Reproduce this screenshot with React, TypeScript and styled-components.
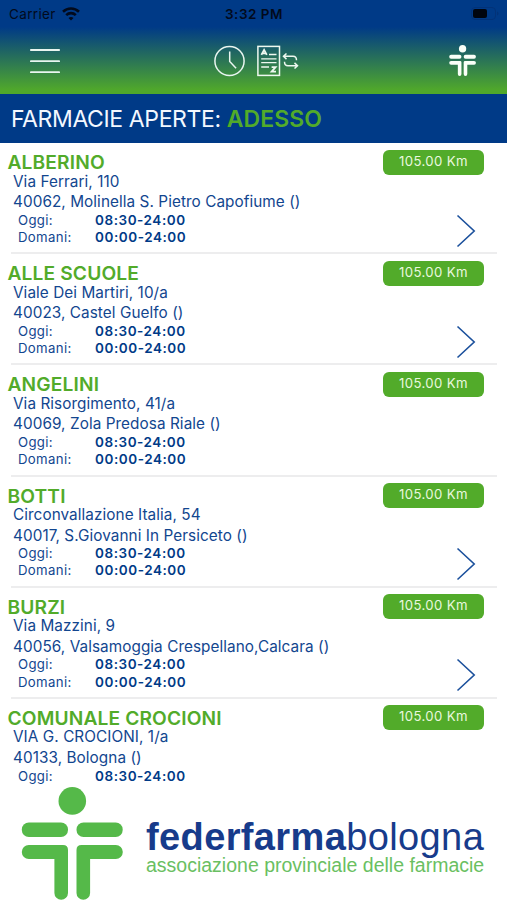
import React from "react";
import styled, { createGlobalStyle } from "styled-components";

const BLUE = "#003a87";
const GREEN = "#52ab2a";

const GlobalStyle = createGlobalStyle`
  *, *::before, *::after { box-sizing: border-box; }
  body { margin: 0; background: #fff; }
`;

const Screen = styled.div`
  display: flex;
  flex-direction: column;
  width: 507px;
  height: 900px;
  overflow: hidden;
  background: #fff;
  color: ${BLUE};
  font-family: Inter, sans-serif;
  white-space: nowrap;
`;

const Header = styled.header`
  flex: none;
  height: 94px;
  background: linear-gradient(to bottom, ${BLUE} 0, ${BLUE} 27px, #50a82b 90px, #50a82b 94px);
`;

const StatusBar = styled.div`
  display: grid;
  grid-template-columns: 1fr auto 1fr;
  align-items: center;
  height: 27px;
  padding: 0 8px 0 9px;
  color: #020a1c;
  font-size: 13.5px;
`;

const Carrier = styled.div`
  display: flex;
  align-items: center;
  gap: 6px;
  letter-spacing: 0.35px;
`;

const Clock = styled.div`
  font-weight: 600;
  letter-spacing: 0.5px;
`;

const Battery = styled.div`
  display: flex;
  justify-content: flex-end;
`;

const NavBar = styled.nav`
  display: grid;
  grid-template-columns: 1fr auto 1fr;
  align-items: center;
  height: 67px;
  padding: 0 31px 0 30px;
`;

const NavGroup = styled.div<{ $align?: "start" | "center" | "end" }>`
  display: flex;
  align-items: center;
  gap: 12.5px;
  padding-left: ${(p) => (p.$align === "center" ? "7px" : "0")};
  justify-content: ${(p) => p.$align ?? "start"};
`;

const Title = styled.h1`
  flex: none;
  height: 49px;
  margin: 0;
  padding-left: 11px;
  background: ${BLUE};
  color: #f3f8ff;
  font-size: 23px;
  font-weight: 400;
  line-height: 50px;
  letter-spacing: -0.38px;
`;

const Highlight = styled.span`
  color: ${GREEN};
  font-weight: 600;
  letter-spacing: 0.05px;
`;

const List = styled.main`
  flex: none;
  height: 642px;
  overflow: hidden;
`;

const Row = styled.article`
  display: grid;
  grid-template-columns: 1fr auto;
  height: 111.2px;
`;

const Details = styled.div`
  padding: 10px 0 0 7.5px;
`;

const Name = styled.h2`
  margin: 0;
  color: ${GREEN};
  font-size: 19.2px;
  font-weight: 600;
  line-height: 18.5px;
  letter-spacing: 0.13px;
`;

const Address = styled.p`
  margin: 0 0 0 5.5px;
  color: #12468f;
  font-size: 15.3px;
  line-height: 20.6px;
  letter-spacing: 0.07px;
`;

const Hours = styled.dl`
  display: grid;
  grid-template-columns: 77px auto;
  margin: -1px 0 0 10.5px;
  font-size: 13.2px;
  line-height: 17.2px;
`;

const Day = styled.dt`
  color: #12468f;
  letter-spacing: 0.35px;
`;

const Time = styled.dd`
  margin: 0;
  font-weight: 600;
  font-size: 13.5px;
  letter-spacing: 0.55px;
`;

const Side = styled.div`
  display: flex;
  flex-direction: column;
  align-items: flex-end;
  padding: 6.5px 23px 0 0;
`;

const Distance = styled.span`
  width: 101px;
  height: 25px;
  border-radius: 6px;
  background: ${GREEN};
  color: #e9f8df;
  font-size: 13.2px;
  line-height: 23.4px;
  letter-spacing: 0.4px;
  text-align: center;
`;

const ChevronIcon = styled.svg`
  margin: 39px 8px 0 0;
`;

const Divider = styled.hr`
  grid-column: 1 / -1;
  align-self: end;
  height: 2px;
  margin: 0 10px 0 11px;
  border: 0;
  background: #ededee;
`;

const Footer = styled.footer`
  display: flex;
  flex: none;
  height: 115px;
  padding: 2px 0 0 21px;
  font-family: "Liberation Sans", sans-serif;
`;

const Brand = styled.div`
  padding: 31px 0 0 23px;
`;

const BrandName = styled.div`
  color: #173b8b;
  font-size: 38px;
  line-height: 38px;
  letter-spacing: 0.38px;
`;

const BrandTagline = styled.div`
  margin-top: -2px;
  color: #6abf62;
  font-size: 19.5px;
  line-height: 22px;
`;

const WifiIcon = () => (
  <svg width="18" height="14" viewBox="0 0 18 14" fill="none" stroke="#020a1c" strokeWidth="2.6">
    <path d="M1 4.7C5.5.4 12.5.4 17 4.7" />
    <path d="M4.2 8.1c2.7-2.6 6.9-2.6 9.6 0" />
    <path d="M9 13.5 6.5 10.9c1.4-1.3 3.6-1.3 5 0Z" fill="#020a1c" stroke="none" />
  </svg>
);

const BatteryIcon = () => (
  <svg width="28" height="13" viewBox="0 0 28 13">
    <rect x=".5" y=".5" width="24" height="12" rx="3.5" fill="none" stroke="#023278" />
    <rect x="2" y="2" width="14" height="9" rx="2" fill="#00050f" />
    <path d="M26 4.5c2 .8 2 3.2 0 4Z" fill="#023278" />
  </svg>
);

const MenuIcon = () => (
  <svg width="30" height="26" viewBox="0 0 30 26" stroke="#e9f5f0" strokeWidth="1.8" strokeLinecap="round">
    <path d="M.8 2h28.4M.8 13.2h28.4M.8 24.2h28.4" />
  </svg>
);

const ClockIcon = () => (
  <svg width="31" height="32" viewBox="0 0 31 32" fill="none" stroke="#e9f5f0" strokeWidth="1.5">
    <circle cx="15.5" cy="16" r="14.6" />
    <path d="M15.7 6.5v10l6.4 6.7" />
  </svg>
);

const SortListIcon = () => (
  <svg width="42" height="32" viewBox="0 0 42 32" fill="none" stroke="#eef8f0" strokeWidth="1.5">
    <rect x=".9" y="1.4" width="21.6" height="29" />
    <path d="M12 9.5h7.5M4.2 13.9h15.3M4.2 17.7h15.3M4.2 22h7.8" strokeWidth="1.3" />
    <path d="m4.4 9.9 2.7-5 2.7 5M5.3 8.4h3.6M14.6 22.1h4l-4 4.5h4.4" strokeWidth="1.8" />
    <path d="m29.5 8.5-3 2.8 3 2.8M26.5 11.3h9.5q3.5 0 3.5 4M37.5 17.9l3 2.8-3 2.8M40.5 20.7H31q-3.5 0-3.5-4" strokeWidth="1.5" />
  </svg>
);

const PersonCross = ({ width, height, color }: { width: number; height: number; color: string }) => (
  <svg width={width} height={height} viewBox="0 0 102 113" preserveAspectRatio="none" fill={color}>
    <circle cx="51.3" cy="13.9" r="13.8" />
    <rect x=".8" y="35.5" width="46.2" height="14.5" rx="7" />
    <rect x="55.5" y="35.5" width="46.2" height="14.5" rx="7" />
    <path d="M7.8 58H42q5 0 5 5v43a6.8 6.8 0 0 1-13.6 0V72H7.8a7 7 0 0 1 0-14Z" />
    <path d="M94.8 58H60.5q-5 0-5 5v43a6.8 6.8 0 0 0 13.6 0V72h25.7a7 7 0 0 0 0-14Z" />
  </svg>
);

const Chevron = () => (
  <ChevronIcon width="20" height="34" viewBox="0 0 20 34" fill="none" stroke="#1b509c" strokeWidth="1.6">
    <path d="M1.5 1.5 18.2 17 1.5 32.5" />
  </ChevronIcon>
);

interface Pharmacy {
  name: string;
  street: string;
  city: string;
  today: string;
  tomorrow?: string;
  link: boolean;
}

const TODAY = "08:30-24:00";
const TOMORROW = "00:00-24:00";

const pharmacies: Pharmacy[] = [
  { name: "ALBERINO", street: "Via Ferrari, 110", city: "40062, Molinella S. Pietro Capofiume ()", today: TODAY, tomorrow: TOMORROW, link: true },
  { name: "ALLE SCUOLE", street: "Viale Dei Martiri, 10/a", city: "40023, Castel Guelfo ()", today: TODAY, tomorrow: TOMORROW, link: true },
  { name: "ANGELINI", street: "Via Risorgimento, 41/a", city: "40069, Zola Predosa Riale ()", today: TODAY, tomorrow: TOMORROW, link: false },
  { name: "BOTTI", street: "Circonvallazione Italia, 54", city: "40017, S.Giovanni In Persiceto ()", today: TODAY, tomorrow: TOMORROW, link: true },
  { name: "BURZI", street: "Via Mazzini, 9", city: "40056, Valsamoggia Crespellano,Calcara ()", today: TODAY, tomorrow: TOMORROW, link: true },
  { name: "COMUNALE CROCIONI", street: "VIA G. CROCIONI, 1/a", city: "40133, Bologna ()", today: TODAY, link: false },
];

const PharmacyRow = ({ pharmacy }: { pharmacy: Pharmacy }) => (
  <Row>
    <Details>
      <Name>{pharmacy.name}</Name>
      <Address>{pharmacy.street}</Address>
      <Address>{pharmacy.city}</Address>
      <Hours>
        <Day>Oggi:</Day>
        <Time>{pharmacy.today}</Time>
        {pharmacy.tomorrow && (
          <>
            <Day>Domani:</Day>
            <Time>{pharmacy.tomorrow}</Time>
          </>
        )}
      </Hours>
    </Details>
    <Side>
      <Distance>105.00 Km</Distance>
      {pharmacy.link && <Chevron />}
    </Side>
    <Divider />
  </Row>
);

export default function App() {
  return (
    <>
      <GlobalStyle />
      <Screen>
        <Header>
          <StatusBar>
            <Carrier>
              Carrier
              <WifiIcon />
            </Carrier>
            <Clock>3:32 PM</Clock>
            <Battery>
              <BatteryIcon />
            </Battery>
          </StatusBar>
          <NavBar>
            <NavGroup>
              <MenuIcon />
            </NavGroup>
            <NavGroup $align="center">
              <ClockIcon />
              <SortListIcon />
            </NavGroup>
            <NavGroup $align="end">
              <PersonCross width={27} height={31} color="#fafff8" />
            </NavGroup>
          </NavBar>
        </Header>
        <Title>
          FARMACIE APERTE: <Highlight>ADESSO</Highlight>
        </Title>
        <List>
          {pharmacies.map((pharmacy) => (
            <PharmacyRow key={pharmacy.name} pharmacy={pharmacy} />
          ))}
        </List>
        <Footer>
          <PersonCross width={102} height={113} color="#55b949" />
          <Brand>
            <BrandName>
              <b>federfarma</b>bologna
            </BrandName>
            <BrandTagline>associazione provinciale delle farmacie</BrandTagline>
          </Brand>
        </Footer>
      </Screen>
    </>
  );
}
